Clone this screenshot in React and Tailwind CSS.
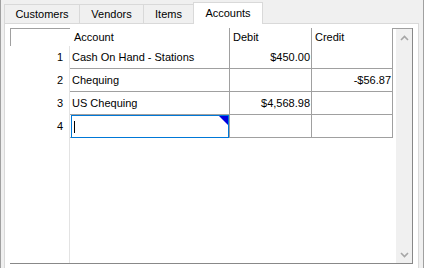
const rows = [
  { n: 1, account: 'Cash On Hand - Stations', debit: '$450.00', credit: '' },
  { n: 2, account: 'Chequing', debit: '', credit: '-$56.87' },
  { n: 3, account: 'US Chequing', debit: '$4,568.98', credit: '' },
];

const Chevron = ({ down }) => (
  <svg width="9" height="6" viewBox="0 0 9 6" className={down ? 'rotate-180' : ''}>
    <polyline points="1,5 4.5,1.5 8,5" fill="none" stroke="#a6a6a6" strokeWidth="1.6" />
  </svg>
);

export default function App() {
  return (
    <div className="w-[424px] h-[268px] overflow-hidden bg-[#f0f0f0] border-l border-r border-[#a0a0a0] font-['Liberation_Sans',Arial,sans-serif] text-[11px] text-black leading-none">
      {/* tab strip */}
      <div className="h-[23px] flex items-end pl-[3px]">
        <div className="w-[76px] h-[19px] border-l border-t border-r border-[#d9d9d9] flex items-center justify-center pt-px">Customers</div>
        <div className="w-[64px] h-[19px] border-t border-r border-[#d9d9d9] flex items-center justify-center pt-px">Vendors</div>
        <div className="w-[49px] h-[19px] border-t border-[#d9d9d9] flex items-center justify-center pt-px">Items</div>
        <div className="relative z-10 -mb-px w-[70px] h-[22px] border-l border-t border-r border-[#d9d9d9] bg-white flex items-center justify-center">Accounts</div>
      </div>

      {/* tab panel */}
      <div className="ml-[3px] w-[415px] h-[260px] border border-[#d9d9d9] bg-white pt-[4px] pl-[5px]">
        <div className="w-[403px] h-[236px] flex border-r border-b border-[#888888]">
          <div className="w-[383px] flex flex-col">
            {/* header */}
            <div className="h-[18px] flex shrink-0">
              <div className="w-[60px] border-t border-l border-[#a0a0a0]" />
              <div className="w-[159px] flex items-center pl-[4px]">Account</div>
              <div className="w-[82px] flex items-center pl-[3px] border-l border-[#a0a0a0]">Debit</div>
              <div className="w-[82px] flex items-center pl-[3px] border-l border-r border-[#a0a0a0]">Credit</div>
            </div>

            {rows.map((r) => (
              <div key={r.n} className="h-[23px] flex shrink-0">
                <div className="w-[60px] flex items-center justify-end pr-[6px] border-r border-[#e3e3e3]">{r.n}</div>
                <div className="w-[159px] flex items-center pl-[2px] border-b border-[#a0a0a0]">{r.account}</div>
                <div className="w-[82px] flex items-center justify-end pr-px border-l border-b border-[#a0a0a0]">{r.debit}</div>
                <div className="w-[82px] flex items-center justify-end pr-px border-l border-r border-b border-[#a0a0a0]">{r.credit}</div>
              </div>
            ))}

            {/* new row being edited */}
            <div className="h-[23px] flex shrink-0">
              <div className="w-[60px] flex items-center justify-end pr-[6px] border-r border-[#e3e3e3]">4</div>
              <div className="w-[159px] pl-[1px] border-b border-[#a0a0a0]">
                <div className="relative h-[23px] border border-[#0078d7] flex items-center pl-[2px]">
                  <span className="w-px h-[12px] bg-black" />
                  <svg width="9" height="9" viewBox="0 0 9 9" className="absolute top-0 right-0">
                    <polygon points="0,0 9,0 9,9" fill="#0000e0" />
                  </svg>
                </div>
              </div>
              <div className="w-[82px] border-l border-b border-[#a0a0a0]" />
              <div className="w-[82px] border-l border-r border-b border-[#a0a0a0]" />
            </div>

            {/* empty area */}
            <div className="flex-1 flex">
              <div className="w-[60px] border-r border-[#e3e3e3]" />
            </div>
          </div>

          {/* vertical scrollbar */}
          <div className="w-[19px] border-t border-[#a0a0a0] pl-[3px]">
            <div className="h-full bg-[#f0f0f0] flex flex-col justify-between">
              <div className="h-[17px] flex items-center justify-center">
                <Chevron />
              </div>
              <div className="h-[17px] flex items-center justify-center">
                <Chevron down />
              </div>
            </div>
          </div>
        </div>
      </div>
    </div>
  );
}
